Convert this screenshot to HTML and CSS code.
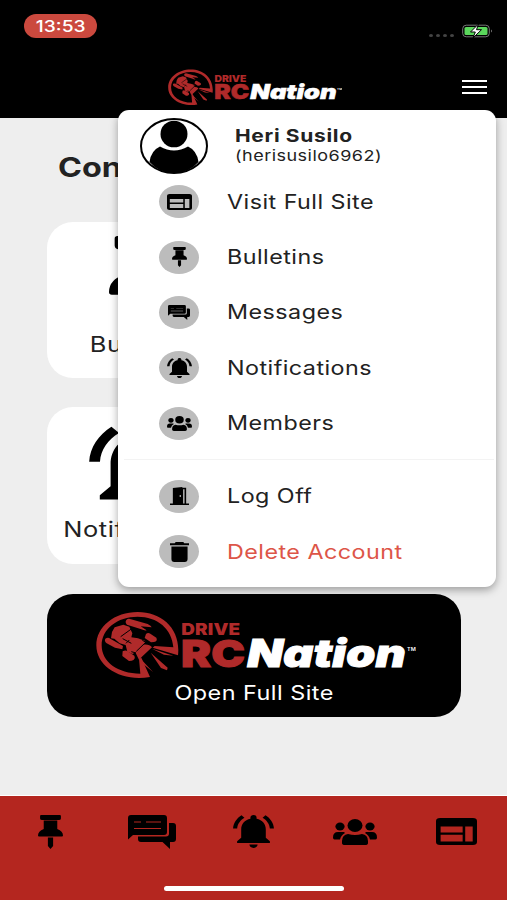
FILE: index.html
```html
<!DOCTYPE html>
<html lang="en">
<head>
    <meta charset="UTF-8">
    <meta name="viewport" content="width=device-width, initial-scale=1.0">
    <title>Drive RC Nation</title>
    <link rel="stylesheet" href="styles.css">
</head>
<body>
<svg class="sprite" aria-hidden="true">
    <symbol id="pin" viewBox="0 0 24 34" preserveAspectRatio="none">
        <path d="M3 0h18q1 0 1 1v2.500q0 1.500-2 1.500H4q-2 0-2-1.500V1q0-1 1-1zM5.500 5.500h13V14Q24 16 24 20.500q0 1-1 1H1q-1 0-1-1Q0 16 5.500 14zM9.500 22.500h5V31L12 34l-2.500-3z"/>
    </symbol>
    <symbol id="chat" viewBox="0 0 48 34" preserveAspectRatio="none">
        <path fill-rule="evenodd" d="M3 0h33q3 0 3 3v14q0 3-3 3H5l-5 4.500V3q0-3 3-3zM6 6.600v1h7v-1zM18 6.600v1h15v-1zM6 13v1h27v-1z"/>
        <path d="M41 8h4q3 0 3 3v13q0 3-3 3h-3v7l-7.500-7H13q-3 0-3-3v-2.500h28q3 0 3-3z"/>
    </symbol>
    <symbol id="bell" viewBox="2 2.500 20 19.500" preserveAspectRatio="none">
        <path d="M7.580 4.080L6.150 2.650C3.750 4.480 2.170 7.300 2.030 10.500h2c.15-2.650 1.510-4.970 3.550-6.420zM19.970 10.500h2c-.15-3.200-1.730-6.020-4.120-7.850l-1.420 1.430c2.020 1.450 3.390 3.770 3.540 6.420zM18 11c0-3.070-1.640-5.640-4.500-6.320V4c0-.83-.67-1.500-1.500-1.500s-1.500.67-1.500 1.500v.68C7.630 5.360 6 7.920 6 11v5l-2 2v1h16v-1l-2-2v-5zM12 22c1.100 0 2-.9 2-2h-4c0 1.100.9 2 2 2z"/>
    </symbol>
    <symbol id="people" viewBox="0 0 44 26" preserveAspectRatio="none">
        <ellipse cx="22" cy="6.500" rx="7.500" ry="6.500"/>
        <ellipse cx="7" cy="7.500" rx="4.600" ry="4"/>
        <ellipse cx="37" cy="7.500" rx="4.600" ry="4"/>
        <path d="M15 15q7 2 14 0 6 1 6 7v2q0 2-3 2H12q-3 0-3-2v-2q0-6 6-7zM5 13h6l1 1q-4 2-5 6.500H1.500Q0 20.500 0 18.500 0 13 5 13zM39 13h-6l-1 1q4 2 5 6.500h5.500q1.500 0 1.500-2Q44 13 39 13z"/>
    </symbol>
    <symbol id="web" viewBox="0 0 40 27" preserveAspectRatio="none">
        <path fill-rule="evenodd" d="M4 0h32q4 0 4 3v21q0 3-4 3H4q-4 0-4-3V3q0-3 4-3zM4.500 8.500v6H26v-6zM4.500 16.700v6.800H26v-6.800zM28.500 8.500v15h7.300v-15z"/>
    </symbol>
    <symbol id="door" viewBox="0 0 20 18" preserveAspectRatio="none">
        <path fill-rule="evenodd" d="M3 1l10-1v.8h4V16.500h3V18H0v-1.500h3zM13.800 2.300V16.500h1.500V2.300zM10.200 8v2h1.200V8z"/>
    </symbol>
    <symbol id="trash" viewBox="0 0 20 20" preserveAspectRatio="none">
        <path d="M6 0h8l1 1.200h5v2H0v-2h5zM1.500 4.500h17V17q0 3-3 3h-11q-3 0-3-3z"/>
    </symbol>
    <symbol id="logo" viewBox="48 33 960 207" preserveAspectRatio="none">
        <g class="car" transform="translate(36 24)">
            <!-- broken ring -->
            <path d="M174 207C90 222 13 178 13 112 13 56 68 12 137 12c74 0 130 52 121 130l-76-23 6-5 56 4C240 62 196 26 137 26 76 26 29 63 29 112c0 50 48 85 116 85l-4-45 7-3z"/>
            <!-- wheels -->
            <path d="M103 36q6-6 14-2l50 14q11 5 12 10l-33-3 18 12q-8 1-16-3L105 50q-7-7-2-14zM40 92q8-5 15 0l38 22-2 10-22-5-25-13q-8-7-4-14zM162 78q6-6 13-1l18 12q5 10-7 13l-9 1-19-13zM92 130q9-5 15 0l20 13q5 11-8 15l-8 1-20-15z"/>
            <!-- body -->
            <path d="M60 72l8-14 26-8 18 6 9 20-3 12 20 3 22 8-3 10-24 23-12 6-15-7-5-20-18-5-16-14-10-1z"/>
            <path d="M130 133l25-23q17-2 25 8l-31 29-8 8z"/>
            <path d="M176 134l51 45-2 8-18-7zM180 122l64 21-28-3zM150 157l33 35-34-28z"/>
        </g>
        <g class="gaps" transform="translate(36 24)">
            <path d="M86 86l32-23M102 106l10-10M133 130l27-26M92 92l26 14M151 97l18 10M118 131l14 4"/>
        </g>
        <text class="logo-word red" x="304" y="105" font-size="49" textLength="177" lengthAdjust="spacingAndGlyphs">DRIVE</text>
        <text class="logo-word red thick" x="303" y="202" font-size="112" textLength="193" lengthAdjust="spacingAndGlyphs">RC</text>
        <text class="logo-word white thick" x="502" y="202" font-size="113" textLength="476" lengthAdjust="spacingAndGlyphs" font-style="italic">Nation</text>
        <text class="logo-tm" x="981" y="152" font-size="14" textLength="27" lengthAdjust="spacingAndGlyphs">TM</text>
    </symbol>
</svg>

<header class="header">
    <div class="status">
        <div class="clock"><span class="wide">13:53</span></div>
        <div class="signal"><i></i><i></i><i></i><i></i></div>
        <svg class="battery" viewBox="0 0 31 16">
            <rect x=".7" y="2.200" width="26.600" height="11.600" rx="3.500" fill="none" stroke="#777"/>
            <rect x="2.500" y="4" width="23" height="8" rx="1.500" fill="#5bd75c"/>
            <path d="M29 6.500q2 1.500 0 3z" fill="#777"/>
            <path d="M16.500 1L8.500 9h4.800L11 15l8.500-8.300h-5z" fill="#fff" stroke="#000"/>
        </svg>
    </div>
    <svg class="header-logo"><use href="#logo"/></svg>
    <div class="burger"><i></i><i></i><i></i></div>

    <div class="menu">
        <div class="profile">
            <svg class="avatar" viewBox="0 0 68 56" preserveAspectRatio="none">
                <ellipse cx="34" cy="28" rx="33" ry="27" fill="#fff" stroke="#000" stroke-width="2"/>
                <ellipse cx="34" cy="16" rx="13.500" ry="13.300"/>
                <path d="M20 28.500q14 8 28 0 9 4 10.500 15.500Q49 55 34 55T9.500 44Q11 32.500 20 28.500z"/>
            </svg>
            <div class="who">
                <div class="name"><span class="wide">Heri Susilo</span></div>
                <div class="user"><span class="wide">(herisusilo6962)</span></div>
            </div>
        </div>
        <div class="item"><span class="dot"><svg class="i-web"><use href="#web"/></svg></span><span class="wide">Visit Full Site</span></div>
        <div class="item"><span class="dot"><svg class="i-pin"><use href="#pin"/></svg></span><span class="wide">Bulletins</span></div>
        <div class="item"><span class="dot"><svg class="i-chat"><use href="#chat"/></svg></span><span class="wide">Messages</span></div>
        <div class="item"><span class="dot"><svg class="i-bell"><use href="#bell"/></svg></span><span class="wide">Notifications</span></div>
        <div class="item"><span class="dot"><svg class="i-people"><use href="#people"/></svg></span><span class="wide">Members</span></div>
        <div class="divider"></div>
        <div class="item"><span class="dot"><svg class="i-door"><use href="#door"/></svg></span><span class="wide">Log Off</span></div>
        <div class="item danger"><span class="dot"><svg class="i-trash"><use href="#trash"/></svg></span><span class="wide">Delete Account</span></div>
    </div>
</header>

<main class="content">
    <h1><span class="wide">Connect</span></h1>
    <div class="cards">
        <div class="card"><svg class="card-pin"><use href="#pin"/></svg><span class="wide">Bulletins</span></div>
        <div class="card"></div>
        <div class="card"><svg class="card-bell"><use href="#bell"/></svg><span class="wide">Notifications</span></div>
        <div class="card"></div>
    </div>
    <div class="banner">
        <svg class="banner-logo"><use href="#logo"/></svg>
        <span class="wide">Open Full Site</span>
    </div>
</main>

<nav class="tabs">
    <div class="tab"><svg class="t-pin"><use href="#pin"/></svg></div>
    <div class="tab"><svg class="t-chat"><use href="#chat"/></svg></div>
    <div class="tab"><svg class="t-bell"><use href="#bell"/></svg></div>
    <div class="tab"><svg class="t-people"><use href="#people"/></svg></div>
    <div class="tab"><svg class="t-web"><use href="#web"/></svg></div>
    <div class="home-bar"></div>
</nav>
</body>
</html>
```
FILE: styles.css
```css
* {
    box-sizing: border-box;
}
body {
    margin: 0;
    height: 900px;
    display: flex;
    flex-direction: column;
    overflow: hidden;
    background: #eee;
    color: #222;
    font-family: Inter, "Liberation Sans", sans-serif;
}
svg {
    display: block;
    flex: none;
}
.sprite {
    position: absolute;
    width: 0;
    height: 0;
}
.wide {
    display: inline-block;
    white-space: nowrap;
    transform: scaleX(1.2);
    transform-origin: left center;
}

/* header */
.header {
    position: relative;
    height: 118px;
    flex: none;
    background: #000;
}
.status {
    display: flex;
    height: 69px;
    padding: 14px 14px 0 24px;
}
.clock {
    width: 73px;
    height: 24px;
    border-radius: 12px;
    background: #cb493e;
    color: #fff;
    font-size: 16px;
    font-weight: 500;
    line-height: 24px;
    text-align: center;
}
.clock .wide {
    transform-origin: center;
}
.signal {
    display: flex;
    gap: 3px;
    margin: 20px 8px 0 auto;
}
.signal i {
    width: 4px;
    height: 3px;
    border-radius: 50%;
    background: #444;
}
.battery {
    width: 31px;
    height: 16px;
    margin-top: 9px;
}
.header-logo {
    width: 174px;
    height: 37px;
    margin-left: 168px;
}
.car,
.red {
    fill: #b02a2a;
}
.gaps {
    fill: none;
    stroke: #000;
    stroke-width: 3px;
}
.logo-word {
    font-family: Inter, sans-serif;
    font-weight: 900;
}
.white {
    fill: #fff;
}
.thick {
    stroke-width: 3px;
}
.thick.red {
    stroke: #b02a2a;
}
.thick.white {
    stroke: #fff;
}
.logo-tm {
    fill: #fff;
    font-family: Inter, sans-serif;
    font-weight: 600;
}
.burger {
    position: absolute;
    top: 80px;
    right: 20px;
    width: 25px;
    display: flex;
    flex-direction: column;
    gap: 4px;
}
.burger i {
    height: 2px;
    background: #fff;
}

/* dropdown */
.menu {
    position: absolute;
    z-index: 2;
    top: 110px;
    left: 118px;
    width: 378px;
    height: 477px;
    padding-top: 8px;
    border-radius: 11px;
    background: #fff;
    box-shadow: 0 3px 9px rgba(0, 0, 0, 0.35);
}
.profile {
    display: flex;
    height: 56px;
    padding-left: 22px;
}
.avatar {
    width: 68px;
    height: 56px;
}
.who {
    margin-left: 27px;
    padding-top: 8px;
    line-height: 20px;
}
.name {
    font-size: 17.5px;
    font-weight: 700;
    letter-spacing: 0.55px;
}
.user {
    font-size: 15px;
    letter-spacing: 0.4px;
}
.item {
    display: flex;
    align-items: center;
    height: 55.4px;
    padding-left: 41px;
    font-size: 20px;
    letter-spacing: 0.4px;
}
.item .wide {
    transform: scaleX(1.165);
}
.dot {
    display: flex;
    align-items: center;
    justify-content: center;
    width: 40px;
    height: 33px;
    margin-right: 27.5px;
    border-radius: 50%;
    background: #bcbcbc;
}
.divider {
    height: 1px;
    margin: 8px 2px 8.5px 6px;
    background: #f3f3f3;
}
.danger {
    color: #dd5548;
}
.i-web { width: 25px; height: 16px; }
.i-pin { width: 15px; height: 20px; }
.i-chat { width: 22px; height: 15px; }
.i-bell { width: 25px; height: 20px; }
.i-people { width: 25px; height: 15px; }
.i-door { width: 19px; height: 18px; }
.i-trash { width: 19px; height: 20px; }

/* page */
.content {
    flex: 1;
    padding: 31px 46px 0 47px;
}
h1 {
    margin: 0 0 35.5px 11px;
    font-size: 27px;
    line-height: 37px;
}
.cards {
    display: grid;
    grid-template-columns: 192px 192px;
    gap: 29px 30px;
}
.card {
    display: flex;
    flex-direction: column;
    align-items: center;
    height: 156.5px;
    border-radius: 26px;
    background: #fff;
    font-size: 21px;
    letter-spacing: 0.5px;
}
.card .wide {
    transform: scaleX(1.21);
    transform-origin: center;
}
.banner .wide {
    transform: scaleX(1.17);
    transform-origin: center;
}
.card-pin {
    width: 68px;
    height: 93px;
    margin: 14.5px 0 3px;
}
.card-bell {
    width: 108px;
    height: 87px;
    margin: 19px 0 4px;
}
.banner {
    display: flex;
    flex-direction: column;
    align-items: center;
    width: 414px;
    height: 123px;
    margin-top: 30px;
    padding-top: 17px;
    border-radius: 26px;
    background: #000;
    color: #fff;
    font-size: 20px;
    letter-spacing: 0.4px;
}
.banner-logo {
    width: 320px;
    height: 69px;
    margin: 0 0 1px 4px;
}

/* bottom tabs */
.tabs {
    position: relative;
    display: flex;
    height: 105px;
    flex: none;
    border-top: 1px solid #fff;
    background: #b4261f;
}
.tab {
    display: flex;
    align-items: center;
    justify-content: center;
    flex: 1;
    height: 71px;
}
.t-pin { width: 25px; height: 34px; }
.t-chat { width: 48px; height: 34px; }
.t-bell { width: 41px; height: 33px; }
.t-people { width: 44px; height: 26px; }
.t-web { width: 41px; height: 27px; }
.home-bar {
    position: absolute;
    bottom: 9px;
    left: 164px;
    width: 180px;
    height: 5px;
    border-radius: 3px;
    background: #fff;
}
```
